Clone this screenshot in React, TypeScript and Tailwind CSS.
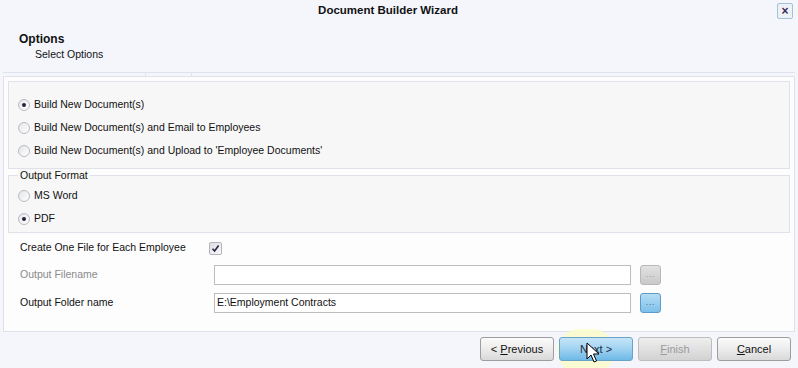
import React from "react";

function Radio({ checked }: { checked?: boolean }) {
  return (
    <span className="relative flex h-[12px] w-[12px] items-center justify-center rounded-full border border-[#b9bcc4] bg-gradient-to-br from-[#e4e5e9] to-[#ffffff]">
      {checked && <span className="h-[4px] w-[4px] rounded-full bg-[#2a1f3d]" />}
    </span>
  );
}

function RadioRow({ label, checked }: { label: string; checked?: boolean }) {
  return (
    <div className="flex h-[23px] items-center gap-[4px] pl-[9px]">
      <Radio checked={checked} />
      <span className="text-[#111]">{label}</span>
    </div>
  );
}

function Ellipsis({ active }: { active?: boolean }) {
  return (
    <div
      className={`flex h-[20px] w-[21px] items-end justify-center rounded-[3px] border pb-[5px] ${
        active
          ? "border-[#5f9bc4] bg-gradient-to-b from-[#b6ddf4] to-[#7cc0ea]"
          : "border-[#b8b8b8] bg-gradient-to-b from-[#e2e2e2] to-[#c9c9c9]"
      }`}
    >
      <span className={`text-[8px] leading-none tracking-[1px] ${active ? "text-[#1d3f64]" : "text-[#888]"}`}>...</span>
    </div>
  );
}

function WizButton({ children, variant }: { children: React.ReactNode; variant?: "blue" | "disabled" }) {
  const cls =
    variant === "blue"
      ? "border-[#6aa3c8] bg-gradient-to-b from-[#c7e6f8] via-[#9fd2f1] to-[#6db9e6] text-[#1a2a40]"
      : variant === "disabled"
      ? "border-[#bdbdbd] bg-gradient-to-b from-[#efefef] to-[#d2d2d2] text-[#9a9a9a]"
      : "border-[#9d9d9d] bg-gradient-to-b from-[#fbfbfb] via-[#ececec] to-[#d9d9d9] text-[#111]";
  return (
    <div className={`flex h-[24px] w-[74px] items-center justify-center rounded-[3px] border text-[11px] ${cls}`}>
      {children}
    </div>
  );
}

export default function App() {
  return (
    <div
      className="flex h-[368px] w-[798px] flex-col bg-[#f5f6fc] text-[10.5px]"
      style={{ fontFamily: "Tahoma, 'Liberation Sans', Arial, sans-serif" }}
    >
      {/* title bar */}
      <div className="relative flex h-[22px] items-center justify-center pr-[22px]">
        <span className="text-[11.5px] font-bold text-[#111]">Document Builder Wizard</span>
        <div className="absolute right-[5px] top-[3px] flex h-[16px] w-[16px] items-center justify-center rounded-[2px] border border-[#9fc4d8] bg-[#eef2f7] text-[12px] font-bold leading-none text-[#3a2a55]">
          ×
        </div>
      </div>

      {/* header */}
      <div className="flex h-[50px] flex-col pl-[19px] pt-[10px]">
        <span className="text-[12px] font-bold leading-[14px] text-[#111]">Options</span>
        <span className="pl-[16px] pt-[2px] leading-[13px] text-[#111]">Select Options</span>
      </div>

      {/* tab strip line */}
      <div className="mx-[3px] flex h-[4px] border-t border-[#dfe3ef]">
        <div className="w-[142px]" />
        <div className="w-[47px] border-x border-[#dfe3ef]" />
      </div>

      {/* main panel */}
      <div className="mx-[3px] flex h-[256px] flex-col border border-[#dfe2ea] bg-[#fdfdfe] px-[4px] pt-[4px]">
        {/* source group */}
        <div className="flex h-[88px] flex-col border border-[#e1e1e9] bg-[#f7f7f7] pt-[11px]">
          <RadioRow label="Build New Document(s)" checked />
          <RadioRow label="Build New Document(s) and Email to Employees" />
          <RadioRow label="Build New Document(s) and Upload to 'Employee Documents'" />
        </div>

        {/* output format */}
        <div className="relative mt-[6px] flex h-[58px] flex-col border border-[#e1e1e9] bg-[#f7f7f7] pt-[8px]">
          <span className="absolute left-[9px] top-[-7px] bg-[#f7f7f7] px-[2px] leading-[13px] text-[#111]">Output Format</span>
          <RadioRow label="MS Word" />
          <RadioRow label="PDF" checked />
        </div>

        {/* options */}
        <div className="mt-[4px] flex flex-col pl-[12px]">
          <div className="flex h-[22px] items-center">
            <span className="w-[189px] text-[#111]">Create One File for Each Employee</span>
            <span className="flex h-[13px] w-[13px] items-center justify-center rounded-[2px] border border-[#b3b3bb] bg-gradient-to-br from-[#dcdde2] to-[#fafafa]">
              <svg width="9" height="9" viewBox="0 0 9 9">
                <path d="M1.5 4.8 L3.6 7 L7.6 1.6" fill="none" stroke="#2c1f44" strokeWidth="1.6" />
              </svg>
            </span>
          </div>
          <div className="mt-[5px] flex h-[22px] items-center">
            <span className="w-[194px] text-[#8a8a8a]">Output Filename</span>
            <div className="h-[20px] w-[417px] border border-[#bdbdbd] bg-white" />
            <div className="ml-[9px]">
              <Ellipsis />
            </div>
          </div>
          <div className="mt-[6px] flex h-[22px] items-center">
            <span className="w-[194px] text-[#111]">Output Folder name</span>
            <div className="flex h-[20px] w-[417px] items-center border border-[#bdbdbd] bg-white pl-[2px] text-[#111]">
              E:\Employment Contracts
            </div>
            <div className="ml-[9px]">
              <Ellipsis active />
            </div>
          </div>
        </div>
      </div>

      {/* footer buttons */}
      <div className="relative flex justify-end gap-[5px] pr-[7px] pt-[5px]">
        <WizButton>
          &lt;&nbsp;<u>P</u>revious
        </WizButton>
        <div className="relative">
          <div className="absolute left-[-2px] top-[-8px] h-[44px] w-[58px] rounded-full bg-[#fbfcc8] opacity-80" />
          <div className="relative">
            <WizButton variant="blue">
              N<u>e</u>xt &gt;
            </WizButton>
          </div>
          <svg className="absolute left-[27px] top-[5px]" width="14" height="22" viewBox="0 0 14 22">
            <path d="M1 1 L1 17 L5 13 L8 20 L10.5 19 L7.5 12 L13 12 Z" fill="#fff" stroke="#000" strokeWidth="1" strokeLinejoin="round" />
          </svg>
        </div>
        <WizButton variant="disabled">
          <u>F</u>inish
        </WizButton>
        <WizButton>
          <u>C</u>ancel
        </WizButton>
      </div>
    </div>
  );
}
